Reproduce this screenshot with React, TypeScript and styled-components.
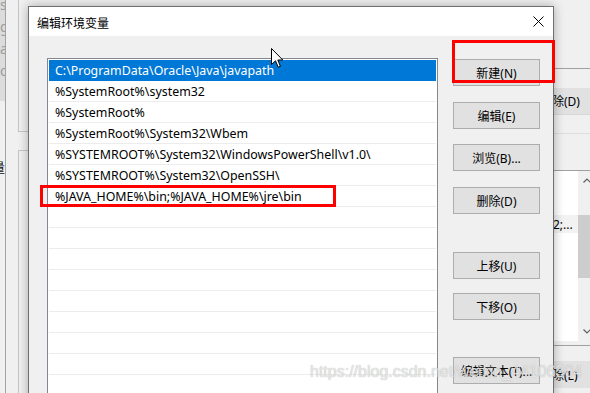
import React from 'react';
import styled, { createGlobalStyle } from 'styled-components';

const UI_FONT = `"Noto Sans", "Noto Sans CJK SC", sans-serif`;

const GlobalStyle = createGlobalStyle`
  html, body {
    margin: 0;
    padding: 0;
  }
  body {
    background: #f0f0f0;
    font-family: ${UI_FONT};
  }
`;

const Desktop = styled.div`
  position: relative;
  width: 590px;
  height: 393px;
  overflow: hidden;
  display: flex;
  align-items: flex-start;
  background: #f0f0f0;
  font-family: ${UI_FONT};
`;

/* ---------- window behind, left part ---------- */

const LeftBack = styled.div`
  width: 28px;
  height: 393px;
  flex: none;
  display: flex;
`;

const CutStrip = styled.div`
  width: 5px;
  display: flex;
  flex-direction: column;
  overflow: hidden;
  border-right: 1px solid #a3a3a3;
`;

const FadedText = styled.div`
  height: 107px;
  background: #dcdcdc;
  display: flex;
  flex-direction: column;
  align-items: flex-end;
  font-size: 14px;
  line-height: 22px;
  color: #9c9c9c;
  margin-top: -6px;
  direction: rtl;
`;

const CutLabel = styled.div`
  margin-top: 56px;
  font-size: 13px;
  color: #111;
  direction: rtl;
  white-space: nowrap;
`;

const BackPanel = styled.div`
  width: 12px;
  background: #f0f0f0;
`;

const GroupColumn = styled.div`
  width: 10px;
  display: flex;
  flex-direction: column;
`;

const GroupPart = styled.div<{ $h?: number; $edge: 'top' | 'bottom' | 'none' }>`
  box-sizing: border-box;
  height: ${p => (p.$h ? `${p.$h}px` : 'auto')};
  flex: ${p => (p.$h ? 'none' : '1')};
  border-left: ${p => (p.$edge === 'none' ? '0' : '1px solid #c6c6c6')};
  ${p => p.$edge === 'top' && 'border-bottom: 1px solid #c6c6c6;'}
  ${p => p.$edge === 'bottom' && 'border-top: 1px solid #c6c6c6;'}
`;

/* ---------- window behind, right part ---------- */

const RightBack = styled.div`
  width: 36px;
  height: 393px;
  flex: none;
  display: flex;
  flex-direction: column;
  overflow: hidden;
  font-size: 12px;
  color: #000;
`;

const Fill = styled.div<{ $h: number; $bg?: string }>`
  height: ${p => p.$h}px;
  flex: none;
  background: ${p => p.$bg || '#f0f0f0'};
`;

const HLine = styled.div<{ $c?: string }>`
  height: 1px;
  flex: none;
  background: ${p => p.$c || '#a0a0a0'};
`;

const BackButton = styled.div<{ $h: number }>`
  height: ${p => p.$h}px;
  flex: none;
  background: #e1e1e1;
  display: flex;
  align-items: center;
  margin-left: -2px;
  white-space: nowrap;
`;

const BackList = styled.div`
  height: 170px;
  flex: none;
  display: flex;
  background: #fff;
  border-top: 1px solid #a0a0a0;
`;

const BackListBody = styled.div`
  width: 24px;
  flex: none;
  display: flex;
  flex-direction: column;
`;

const BackRow = styled.div`
  margin-top: 44px;
  height: 18px;
  background: #f2f2f2;
  display: flex;
  align-items: center;
  margin-left: -1px;
  white-space: nowrap;
`;

const ScrollBar = styled.div`
  width: 17px;
  flex: none;
  background: #f0f0f0;
  display: flex;
  flex-direction: column;
  align-items: center;
`;

const ScrollArrow = styled.svg`
  width: 8px;
  height: 5px;
  margin: 7px 0;
  flex: none;
`;

const ScrollThumb = styled.div`
  width: 100%;
  height: 63px;
  margin-top: 25px;
  background: #cdcdcd;
`;

const ScrollTrack = styled.div`
  flex: 1;
`;

/* ---------- dialog ---------- */

const Dialog = styled.div`
  position: relative;
  z-index: 1;
  width: 526px;
  height: 400px;
  margin-top: 6px;
  flex: none;
  box-sizing: border-box;
  border: 1px solid #6f6f6f;
  background: #f0f0f0;
  box-shadow: 0 0 10px rgba(0, 0, 0, 0.3);
  display: flex;
  flex-direction: column;
`;

const TitleBar = styled.div`
  height: 29px;
  flex: none;
  background: #fff;
  display: flex;
  align-items: center;
  justify-content: space-between;
  padding-left: 8px;
`;

const Title = styled.span`
  font-size: 12px;
  color: #000;
  margin-top: 2px;
`;

const CloseButton = styled.div`
  width: 29px;
  height: 29px;
  display: flex;
  align-items: center;
  justify-content: center;
`;

const Body = styled.div`
  flex: 1;
  display: flex;
  gap: 15px;
  padding: 22px 0 0 18px;
`;

const ListBox = styled.div`
  width: 391px;
  height: 400px;
  flex: none;
  box-sizing: border-box;
  border: 1px solid #828790;
  background: #fff;
  padding: 1px;
  overflow: hidden;
`;

const Row = styled.div<{ $selected?: boolean }>`
  height: 21px;
  box-sizing: border-box;
  border-bottom: 1px solid ${p => (p.$selected ? '#0078d7' : '#ececec')};
  background: ${p => (p.$selected ? '#0078d7' : 'transparent')};
  color: ${p => (p.$selected ? '#fff' : '#000')};
  padding-left: 6px;
  display: flex;
  align-items: center;
  font-size: 12.4px;
  white-space: nowrap;
`;

const ButtonColumn = styled.div`
  display: flex;
  flex-direction: column;
`;

const Button = styled.div<{ $mt: number }>`
  width: 87px;
  height: 27px;
  margin-top: ${p => p.$mt}px;
  box-sizing: border-box;
  border: 1px solid #adadad;
  background: #e1e1e1;
  display: flex;
  align-items: center;
  justify-content: center;
  font-size: 12px;
  color: #000;
`;

/* ---------- things on top ---------- */

const Highlight = styled.div<{ $x: number; $y: number; $w: number; $h: number }>`
  position: absolute;
  z-index: 2;
  left: ${p => p.$x}px;
  top: ${p => p.$y}px;
  width: ${p => p.$w}px;
  height: ${p => p.$h}px;
  box-sizing: border-box;
  border: 3px solid #ff0000;
`;

const Cursor = styled.svg`
  position: absolute;
  z-index: 3;
  left: 271px;
  top: 48px;
`;

const Watermark = styled.div`
  position: absolute;
  z-index: 3;
  left: 310px;
  top: 363px;
  font-family: "Liberation Sans", Arial, sans-serif;
  font-size: 16px;
  color: rgba(238, 238, 238, 0.85);
  text-shadow: 0 0 1px rgba(110, 110, 110, 0.55);
  white-space: nowrap;
`;

const paths = [
  'C:\\ProgramData\\Oracle\\Java\\javapath',
  '%SystemRoot%\\system32',
  '%SystemRoot%',
  '%SystemRoot%\\System32\\Wbem',
  '%SYSTEMROOT%\\System32\\WindowsPowerShell\\v1.0\\',
  '%SYSTEMROOT%\\System32\\OpenSSH\\',
  '%JAVA_HOME%\\bin;%JAVA_HOME%\\jre\\bin',
];

const buttons = [
  { label: '新建(N)', mt: 1 },
  { label: '编辑(E)', mt: 16 },
  { label: '浏览(B)...', mt: 15 },
  { label: '删除(D)', mt: 16 },
  { label: '上移(U)', mt: 38 },
  { label: '下移(O)', mt: 14 },
  { label: '编辑文本(T)...', mt: 37 },
];

const rows = [...paths, ...Array(10).fill('')];

const App = () => {
  return (
    <>
      <GlobalStyle />
      <Desktop>
        <LeftBack>
          <CutStrip>
            <FadedText>
              <span>s</span>
              <span>g</span>
              <span>a</span>
              <span>ob</span>
            </FadedText>
            <CutLabel>变量</CutLabel>
          </CutStrip>
          <BackPanel />
          <GroupColumn>
            <GroupPart $h={132} $edge="top" />
            <GroupPart $h={18} $edge="none" />
            <GroupPart $edge="bottom" />
          </GroupColumn>
        </LeftBack>

        <Dialog>
          <TitleBar>
            <Title>编辑环境变量</Title>
            <CloseButton>
              <svg width="11" height="11" viewBox="0 0 11 11">
                <path d="M0.5 0.5 L10.5 10.5 M10.5 0.5 L0.5 10.5" stroke="#000" strokeWidth="1" />
              </svg>
            </CloseButton>
          </TitleBar>
          <Body>
            <ListBox>
              {rows.map((text, i) => (
                <Row key={i} $selected={i === 0}>
                  {text}
                </Row>
              ))}
            </ListBox>
            <ButtonColumn>
              {buttons.map(b => (
                <Button key={b.label} $mt={b.mt}>
                  {b.label}
                </Button>
              ))}
            </ButtonColumn>
          </Body>
        </Dialog>

        <RightBack>
          <Fill $h={68} />
          <HLine />
          <Fill $h={19} />
          <BackButton $h={26}>除(D)</BackButton>
          <HLine $c="#d8d8d8" />
          <Fill $h={18} />
          <HLine $c="#dedede" />
          <Fill $h={36} />
          <BackList>
            <BackListBody>
              <BackRow>2;...</BackRow>
            </BackListBody>
            <ScrollBar>
              <ScrollArrow viewBox="0 0 8 5">
                <path d="M0.5 4.5 L4 1 L7.5 4.5" fill="none" stroke="#606060" strokeWidth="1.2" />
              </ScrollArrow>
              <ScrollThumb />
              <ScrollTrack />
              <ScrollArrow viewBox="0 0 8 5">
                <path d="M0.5 0.5 L4 4 L7.5 0.5" fill="none" stroke="#606060" strokeWidth="1.2" />
              </ScrollArrow>
            </ScrollBar>
          </BackList>
          <Fill $h={4} />
          <HLine />
          <Fill $h={15} />
          <BackButton $h={27}>除(L)</BackButton>
          <Fill $h={20} />
        </RightBack>

        <Highlight $x={452} $y={40} $w={103} $h={43} />
        <Highlight $x={40} $y={185} $w={296} $h={22} />

        <Cursor width="13" height="21" viewBox="0 0 13 21">
          <path
            d="M0.5 0.5 L0.5 16.5 L4.5 12.8 L7.2 19.2 L9.4 18.3 L6.8 12 L11.8 12 Z"
            fill="#fff"
            stroke="#000"
            strokeWidth="1"
            strokeLinejoin="miter"
          />
        </Cursor>

        <Watermark>https://blog.csdn.net/weixin_44106304</Watermark>
      </Desktop>
    </>
  );
};

export default App;
